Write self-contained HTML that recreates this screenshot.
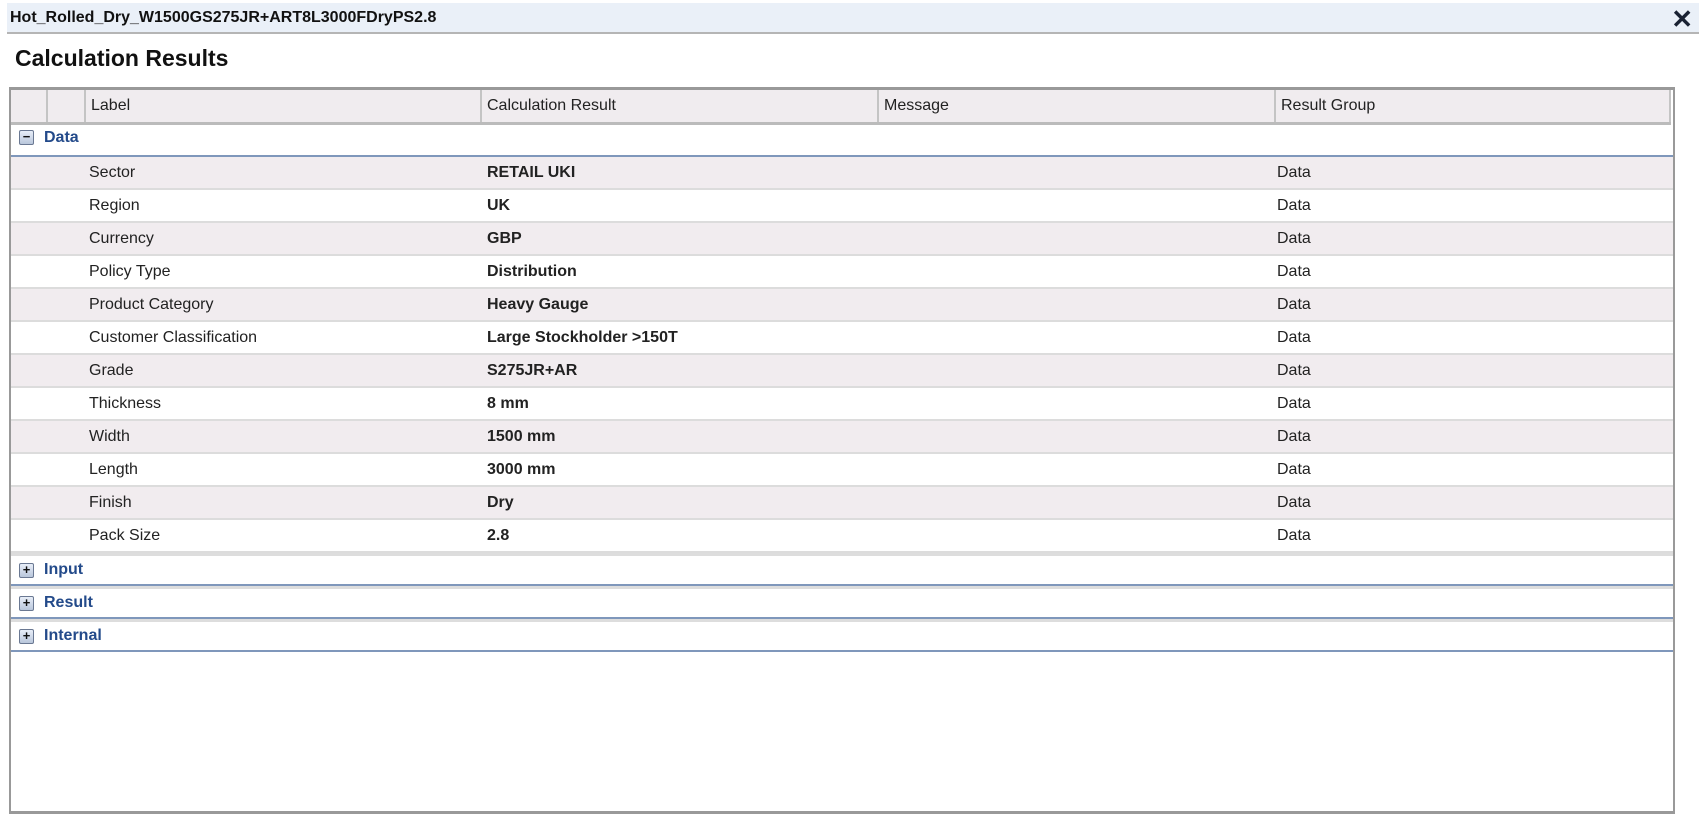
<!DOCTYPE html>
<html><head><meta charset="utf-8"><style>
*{margin:0;padding:0;box-sizing:border-box}
body{width:1707px;height:821px;background:#fff;font-family:"Liberation Sans",Arial,sans-serif;position:relative;overflow:hidden;color:#222}
.bar{position:absolute;left:7px;top:3px;width:1692px;height:31px;background:#eaf0f8;border-bottom:2px solid #b5b5b5}
.bar .t{position:absolute;left:3px;top:6px;font-size:16px;font-weight:bold;color:#111}
.x{position:absolute;right:6px;top:3px;font-size:26px;font-weight:bold;color:#1a2233;line-height:26px}
h1{position:absolute;left:15px;top:45px;font-size:23px;font-weight:bold;color:#111}
.tbl{position:absolute;left:9px;top:87px;width:1666px;height:727px;border:2px solid #999;border-top:3px solid #999;border-bottom:3px solid #999}
.hdr{position:absolute;left:0;top:0;width:1660px;height:35px;background:#f0ecef;border-bottom:3px solid #bbb}
.hdr div{position:absolute;top:0;height:32px;border-right:2px solid #c4c4c4;font-size:16px;line-height:32px;padding-left:5px}
.row{position:absolute;left:0;width:1662px;height:33px;border-bottom:2px solid #dcdcdc;font-size:16px;line-height:31px}
.row.a{background:#f1ecef}
.row span{position:absolute;top:0}
.row .l1{left:78px}
.row .v{left:476px;font-weight:bold}
.row .g{left:1266px}
.grp{position:absolute;left:0;width:1662px;height:33px;border-bottom:2px solid #7f97bb;border-top:3px solid #ddd;font-size:16px;font-weight:bold;color:#234a8a;line-height:28px}
.grp .i{position:absolute;left:8px;top:7px;width:15px;height:15px;border:1px solid #6a7892;border-radius:2px;background:linear-gradient(#e8eef8,#b9c6db);font-size:13px;line-height:12px;text-align:center;color:#111}
.grp .l{position:absolute;left:33px;top:0}
</style></head><body>
<div class="bar"><div class="t">Hot_Rolled_Dry_W1500GS275JR+ART8L3000FDryPS2.8</div><div class="x">✕</div></div>
<h1>Calculation Results</h1>
<div class="tbl">
<div class="hdr">
<div style="left:0;width:37px"></div>
<div style="left:37px;width:38px"></div>
<div style="left:75px;width:396px">Label</div>
<div style="left:471px;width:397px">Calculation Result</div>
<div style="left:868px;width:397px">Message</div>
<div style="left:1265px;width:395px">Result Group</div>
</div>
<div class="grp" style="top:32px;border-top:0;height:35px;line-height:32px"><div class="i" style="top:8px">−</div><div class="l">Data</div></div>
<div class="row a" style="top:67px"><span class="l1">Sector</span><span class="v">RETAIL UKI</span><span class="g">Data</span></div>
<div class="row" style="top:100px"><span class="l1">Region</span><span class="v">UK</span><span class="g">Data</span></div>
<div class="row a" style="top:133px"><span class="l1">Currency</span><span class="v">GBP</span><span class="g">Data</span></div>
<div class="row" style="top:166px"><span class="l1">Policy Type</span><span class="v">Distribution</span><span class="g">Data</span></div>
<div class="row a" style="top:199px"><span class="l1">Product Category</span><span class="v">Heavy Gauge</span><span class="g">Data</span></div>
<div class="row" style="top:232px"><span class="l1">Customer Classification</span><span class="v">Large Stockholder &gt;150T</span><span class="g">Data</span></div>
<div class="row a" style="top:265px"><span class="l1">Grade</span><span class="v">S275JR+AR</span><span class="g">Data</span></div>
<div class="row" style="top:298px"><span class="l1">Thickness</span><span class="v">8 mm</span><span class="g">Data</span></div>
<div class="row a" style="top:331px"><span class="l1">Width</span><span class="v">1500 mm</span><span class="g">Data</span></div>
<div class="row" style="top:364px"><span class="l1">Length</span><span class="v">3000 mm</span><span class="g">Data</span></div>
<div class="row a" style="top:397px"><span class="l1">Finish</span><span class="v">Dry</span><span class="g">Data</span></div>
<div class="row" style="top:430px"><span class="l1">Pack Size</span><span class="v">2.8</span><span class="g">Data</span></div>
<div class="grp" style="top:463px"><div class="i">+</div><div class="l">Input</div></div>
<div class="grp" style="top:496px"><div class="i">+</div><div class="l">Result</div></div>
<div class="grp" style="top:529px"><div class="i">+</div><div class="l">Internal</div></div>
</div>
</body></html>
